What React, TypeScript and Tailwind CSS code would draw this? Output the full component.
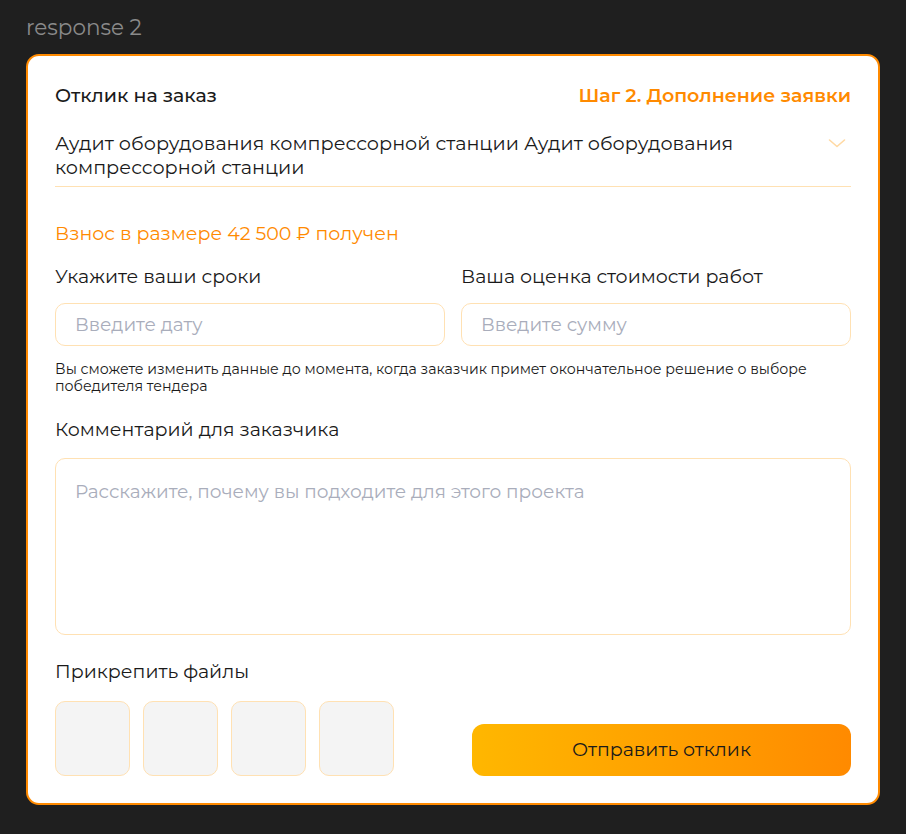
import React from 'react';

function FileSlot() {
  return <div className="w-[75px] h-[75px] rounded-[10px] border border-[#ffe1b3] bg-[#f4f4f4]" />;
}

export default function App() {
  return (
    <div className="min-h-[834px] bg-[#1f1f1f] px-[26px] pt-[14px] font-['Montserrat','Inter',sans-serif]">
      <div className="text-[21.5px] leading-[26px] text-[#8a8a8a]">response 2</div>

      <div className="mt-[14px] rounded-[13px] border-2 border-[#ff8a00] bg-white px-[27px] pt-[27px] pb-[27px]">
        <div className="flex items-center justify-between">
          <div className="text-[19px] leading-[26px] font-medium text-[#1a1a1a]">Отклик на заказ</div>
          <div className="text-[19px] leading-[26px] font-semibold text-[#ff8a00]">Шаг 2. Дополнение заявки</div>
        </div>

        <div className="mt-[22px] flex items-start justify-between border-b border-[#ffe1b3] pb-[7px]">
          <div className="text-[19.2px] leading-[24px] text-[#1a1a1a]">
            Аудит оборудования компрессорной станции Аудит оборудования компрессорной станции
          </div>
          <svg width="20" height="20" viewBox="0 0 20 20" className="mt-[2px] mr-[4px] ml-[40px] shrink-0" fill="none">
            <path d="M2.5 7l7.5 6.5 7.5-6.5" stroke="#ffd9a3" strokeWidth="1.6" strokeLinecap="round" strokeLinejoin="round" />
          </svg>
        </div>

        <div className="mt-[35px] text-[19px] leading-[24px] text-[#ff8a00]">Взнос в размере 42 500 ₽ получен</div>

        <div className="mt-[19px] grid grid-cols-2 gap-[16px]">
          <div>
            <div className="text-[19px] leading-[24px] text-[#1a1a1a]">Укажите ваши сроки</div>
            <div className="mt-[14px] flex h-[43px] items-center rounded-[10px] border border-[#ffe1b3] px-[19px] text-[18.5px] text-[#a9adbb]">
              Введите дату
            </div>
          </div>
          <div>
            <div className="text-[19px] leading-[24px] text-[#1a1a1a]">Ваша оценка стоимости работ</div>
            <div className="mt-[14px] flex h-[43px] items-center rounded-[10px] border border-[#ffe1b3] px-[19px] text-[18.5px] text-[#a9adbb]">
              Введите сумму
            </div>
          </div>
        </div>

        <div className="mt-[15px] pr-[20px] text-[14.2px] leading-[17px] text-[#1a1a1a]">
          Вы сможете изменить данные до момента, когда заказчик примет окончательное решение о выборе победителя тендера
        </div>

        <div className="mt-[23px] text-[19px] leading-[24px] text-[#1a1a1a]">Комментарий для заказчика</div>
        <div className="mt-[16px] h-[177px] rounded-[10px] border border-[#ffe1b3] px-[19px] pt-[21px] text-[18.5px] leading-[24px] text-[#a9adbb]">
          Расскажите, почему вы подходите для этого проекта
        </div>

        <div className="mt-[25px] text-[19px] leading-[24px] text-[#1a1a1a]">Прикрепить файлы</div>
        <div className="mt-[17px] flex items-end justify-between">
          <div className="flex gap-[13px]">
            <FileSlot />
            <FileSlot />
            <FileSlot />
            <FileSlot />
          </div>
          <button className="flex h-[52px] w-[379px] items-center justify-center rounded-[12px] bg-gradient-to-r from-[#ffb700] to-[#ff8a00] text-[19px] text-[#1a1a1a]">
            Отправить отклик
          </button>
        </div>
      </div>
    </div>
  );
}
